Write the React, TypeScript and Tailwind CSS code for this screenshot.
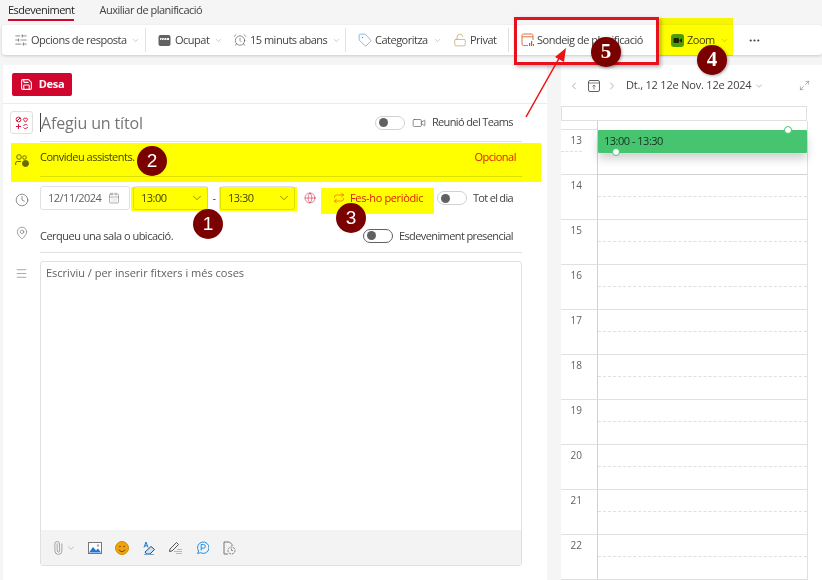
import { Fragment } from 'react'
import {
  ChevronDown,
  ChevronLeft,
  ChevronRight,
  Clock,
  Globe,
  MapPin,
  Maximize2,
  Menu,
  MoreHorizontal,
  Paperclip,
  Repeat,
  Save,
  SlidersHorizontal,
  Tag,
  AlarmClock,
  LockOpen,
  Video,
  CalendarDays,
} from 'lucide-react'

const hours = [14, 15, 16, 17, 18, 19, 20, 21, 22]

function Sep({ className }: { className: string }) {
  return <div className={`h-[24px] w-px shrink-0 bg-[#e0e0e0] ${className}`} />
}

function Toggle({ dark }: { dark?: boolean }) {
  return (
    <div className={`flex h-[14px] w-[30px] shrink-0 items-center rounded-full border bg-white px-[3px] ${dark ? 'border-[#616161]' : 'border-[#d1d1d1]'}`}>
      <div className="h-[9px] w-[9px] rounded-full bg-[#616161]" />
    </div>
  )
}

function Badge({ n, serif, className }: { n: number; serif?: boolean; className: string }) {
  return (
    <div className={`absolute z-30 flex h-[30px] w-[30px] items-center justify-center rounded-full bg-[#7b0000] text-white ${serif ? "font-['Liberation_Serif',serif] text-[21px] font-bold shadow-[1px_1px_3px_rgba(0,0,0,0.35)]" : "font-['Liberation_Sans',sans-serif] text-[19px]"} ${className}`}>
      {n}
    </div>
  )
}

function Chev({ className }: { className: string }) {
  return <ChevronDown size={9} strokeWidth={1} className={`shrink-0 text-[#777] ${className}`} />
}

function BusyIcon() {
  return (
    <svg width="13" height="13" viewBox="0 0 13 13" className="ml-[12px] mr-[4px] shrink-0">
      <rect x="0.5" y="1" width="12" height="11" rx="2" fill="#616161" />
      <path d="M2 4 H11 V6 H2 Z" fill="#fff" />
      <path d="M3 6 L4 4 M5.5 6 L6.5 4 M8 6 L9 4" stroke="#616161" strokeWidth="0.7" />
    </svg>
  )
}

function PollIcon() {
  return (
    <svg width="13" height="14" viewBox="0 0 13 14" className="mr-[3px] shrink-0">
      <path d="M7 12.5 H2.5 A1.5 1.5 0 0 1 1 11 V2.5 A1.5 1.5 0 0 1 2.5 1 H10.5 A1.5 1.5 0 0 1 12 2.5 V7" fill="none" stroke="#d9764a" strokeWidth="1" />
      <path d="M1 3.8 H12" stroke="#d9764a" strokeWidth="1" />
      <path d="M8 10 h1.2 v3 h-1.2 z M10 8 h1.2 v5 h-1.2 z M12 11 h1 v2 h-1 z" fill="#d9540f" />
    </svg>
  )
}

function ZoomIcon() {
  return (
    <svg width="13" height="13" viewBox="0 0 13 13" className="ml-[26px] mr-[3px] shrink-0">
      <rect width="13" height="13" rx="3" fill="#4f9e10" />
      <rect x="2.5" y="4" width="5.5" height="5" rx="1" fill="#222" />
      <path d="M8.5 6 L11 4.3 V8.7 L8.5 7 Z" fill="#222" />
    </svg>
  )
}

function ElementsIcon() {
  return (
    <svg width="14" height="14" viewBox="0 0 14 14" fill="none" stroke="#d1062f" strokeWidth="0.9">
      <circle cx="3.5" cy="3.5" r="2.4" />
      <path d="M2 5 L5 2" />
      <path d="M10.5 6.2 L8.4 3.6 A1.3 1.3 0 0 1 10.5 2.4 A1.3 1.3 0 0 1 12.6 3.6 Z" />
      <path d="M1 10.5 H6 M3.5 8 V13" />
      <path d="M8.5 10 A2.3 2.3 0 0 1 12.6 9.5 M12.6 11 A2.3 2.3 0 0 1 8.5 11.5" />
    </svg>
  )
}

function PeopleIcon() {
  return (
    <svg width="14" height="13" viewBox="0 0 14 13" fill="none" stroke="#6a6a20" strokeWidth="1" className="mt-[20px]">
      <circle cx="4" cy="3" r="2.3" />
      <circle cx="9.5" cy="3.5" r="1.8" />
      <path d="M0.7 11 V9 A1.5 1.5 0 0 1 2.2 7.5 H6" />
      <circle cx="10.5" cy="9.5" r="3" fill="#6a6a20" />
    </svg>
  )
}

function ImgIcon() {
  return (
    <svg width="14" height="12" viewBox="0 0 14 12" className="ml-[12px] shrink-0">
      <rect x="0.5" y="0.5" width="13" height="11" fill="#fff" stroke="#777" />
      <path d="M1 10.5 L5 5 L8 8.5 L10 6.5 L13 10.5 Z" fill="#1f77d0" />
      <circle cx="10" cy="3.5" r="1.2" fill="#aaa" />
    </svg>
  )
}

function EmojiIcon() {
  return (
    <svg width="14" height="14" viewBox="0 0 14 14" className="ml-[13px] shrink-0">
      <circle cx="7" cy="7" r="6.5" fill="#f0a30a" stroke="#d48c00" />
      <circle cx="5" cy="5.5" r="0.8" fill="#6a4a00" />
      <circle cx="9" cy="5.5" r="0.8" fill="#6a4a00" />
      <path d="M3.8 8.5 A3.5 3.5 0 0 0 10.2 8.5" fill="none" stroke="#6a4a00" strokeWidth="0.9" />
    </svg>
  )
}

function EditorIcon() {
  return (
    <svg width="12" height="14" viewBox="0 0 12 14" fill="none" className="ml-[14px] shrink-0">
      <path d="M1 6.5 L3 1 L5 6.5 M1.8 4.8 H4.2" stroke="#1f77d0" />
      <path d="M2 11 L8 5.5 L11.5 8.5 L7 13 H3.5 Z" fill="#cfe3f6" stroke="#1f4f7a" />
      <path d="M1 13.5 H11" stroke="#7aa7d0" />
    </svg>
  )
}

function SignIcon() {
  return (
    <svg width="15" height="13" viewBox="0 0 15 13" fill="none" className="ml-[13px] shrink-0">
      <path d="M1.5 10.5 L2 8 L8.5 1.5 L10.5 3.5 L4 10 Z" stroke="#555" />
      <path d="M6 10.5 H14 M8 12.5 H14 M9 8.5 H14" stroke="#7db5e8" strokeWidth="0.8" />
    </svg>
  )
}

function LoopIcon() {
  return (
    <svg width="13" height="13" viewBox="0 0 13 13" fill="none" stroke="#1f8fe8" className="ml-[13px] shrink-0">
      <path d="M1.5 12.5 L2.6 10 A5.7 5.7 0 1 1 4.5 11.7 Z" />
      <path d="M5.2 9.5 V3.5 H7.5 A1.8 1.8 0 0 1 7.5 7.2 H5.2" />
    </svg>
  )
}

function DocClockIcon() {
  return (
    <svg width="13" height="14" viewBox="0 0 13 14" fill="none" stroke="#777" className="ml-[14px] shrink-0">
      <path d="M5 13 H1 V1 H6.5 L9 3.5 V5" />
      <circle cx="8.5" cy="9.5" r="3.5" strokeDasharray="2 1" />
      <path d="M8.5 7.5 V9.5 H10" strokeWidth="0.8" />
    </svg>
  )
}

function TodayIcon() {
  return (
    <svg width="12" height="12" viewBox="0 0 12 12" fill="none" stroke="#616161" className="ml-[8px] shrink-0">
      <rect x="0.5" y="0.5" width="11" height="11" rx="1.5" />
      <path d="M0.5 3 H11.5 M6 5 V9.5 M4.5 6.5 L6 5 L7.5 6.5" strokeWidth="0.8" />
    </svg>
  )
}

function Toolbar() {
  return (
    <div className="ml-[2px] mt-[5px] flex h-[30px] items-center whitespace-nowrap rounded-[3px] bg-white pl-[12px] text-[11px] tracking-[-0.5px] text-[#424242] shadow-[0_1px_3px_rgba(0,0,0,0.18)]">
      <SlidersHorizontal size={14} strokeWidth={1} className="mr-[3px] shrink-0" />
      <span className="w-[95px]">Opcions de resposta</span>
      <Chev className="ml-[5px]" />
      <Sep className="ml-[5px]" />
      <BusyIcon />
      <span className="w-[33px]">Ocupat</span>
      <Chev className="ml-[6px]" />
      <AlarmClock size={14} strokeWidth={1} className="ml-[10px] mr-[3px] shrink-0" />
      <span className="w-[76px]">15 minuts abans</span>
      <Chev className="ml-[6px]" />
      <Sep className="ml-[4px]" />
      <Tag size={14} strokeWidth={1} className="ml-[12px] mr-[3px] shrink-0 text-[#2f8fe0]" />
      <span className="w-[53px]">Categoritza</span>
      <Chev className="ml-[5px]" />
      <LockOpen size={14} strokeWidth={1.2} className="ml-[11px] mr-[3px] shrink-0 text-[#c19c5c]" />
      <span className="w-[26px]">Privat</span>
      <Sep className="ml-[12px] mr-[12px]" />
      <PollIcon />
      <span className="w-[108px]">Sondeig de planificació</span>
      <ZoomIcon />
      <span className="w-[28px]">Zoom</span>
      <Chev className="ml-[5px]" />
      <MoreHorizontal size={13} className="ml-[19px] shrink-0" />
    </div>
  )
}

function EventForm() {
  return (
    <div className="ml-[3px] flex w-[544px] shrink-0 flex-col bg-white text-[#424242]">
      <div className="flex h-[39px] items-center border-b border-[#ebebeb] pl-[9px]">
        <button className="flex h-[23px] w-[60px] items-center justify-center gap-[6px] rounded-[2px] bg-[#d1062f] text-[11px] font-bold tracking-[-0.3px] text-white">
          <Save size={13} />
          Desa
        </button>
      </div>
      <div className="flex">
        <div className="flex w-[37px] shrink-0 flex-col items-center text-[#616161]">
          <div className="mt-[7px] flex h-[23px] w-[23px] items-center justify-center rounded-[3px] border border-[#e0e0e0]">
            <ElementsIcon />
          </div>
          <PeopleIcon />
          <Clock size={14} strokeWidth={1.2} className="mt-[26px]" />
          <MapPin size={14} strokeWidth={1} className="mt-[19px]" />
          <Menu size={13} strokeWidth={1} className="mt-[27px]" />
        </div>
        <div className="w-[482px] whitespace-nowrap text-[11px] tracking-[-0.5px]">
          <div className="flex h-[38px] items-center border-b border-[#e0e0e0]">
            <div className="h-[19px] w-px bg-[#424242]" />
            <span className="pt-[1px] text-[16px] tracking-[-0.15px] text-[#757575]">Afegiu un títol</span>
            <div className="ml-auto flex items-center pr-[9px]">
              <Toggle />
              <Video size={14} strokeWidth={1} className="ml-[7px] mr-[6px]" />
              <span className="tracking-[-0.62px]">Reunió del Teams</span>
            </div>
          </div>
          <div className="flex h-[35px] items-center justify-between border-b border-[#e0e0e0] pb-[3px]">
            <span>Convideu assistents.</span>
            <span className="pr-[6px] text-[#e02020]">Opcional</span>
          </div>
          <div className="mt-[9px] flex h-[24px] items-center">
            <div className="flex h-[24px] w-[90px] items-center justify-between rounded-[3px] border border-[#e0e0e0] pl-[7px] pr-[9px] text-[#616161]">
              12/11/2024
              <CalendarDays size={12} strokeWidth={1} />
            </div>
            <div className="ml-[3px] flex h-[24px] w-[75px] items-center justify-between rounded-[3px] border border-[#e0e0e0] pl-[7px] pr-[3px]">
              13:00
              <ChevronDown size={14} strokeWidth={1} />
            </div>
            <span className="w-[12px] text-center">-</span>
            <div className="flex h-[24px] w-[75px] items-center justify-between rounded-[3px] border border-[#e0e0e0] pl-[7px] pr-[3px]">
              13:30
              <ChevronDown size={14} strokeWidth={1} />
            </div>
            <Globe size={12} strokeWidth={1} className="ml-[9px] text-[#d1062f]" />
            <Repeat size={12} strokeWidth={1.2} className="ml-[17px] text-[#e64a00]" />
            <span className="ml-[5px] w-[72px] tracking-[-0.35px] text-[#e02020]">Fes-ho periòdic</span>
            <div className="ml-[15px]"><Toggle /></div>
            <span className="ml-[6px] tracking-[-0.7px]">Tot el dia</span>
          </div>
          <div className="flex h-[43px] items-end justify-between border-b border-[#e0e0e0] pb-[8px]">
            <span>Cerqueu una sala o ubicació.</span>
            <div className="flex items-center gap-[6px] pr-[9px]">
              <Toggle dark />
              <span className="tracking-[-0.6px]">Esdeveniment presencial</span>
            </div>
          </div>
          <div className="mt-[8px] flex h-[305px] flex-col rounded-[3px] border border-[#e0e0e0]">
            <div className="flex-1 px-[5px] pt-[3px] tracking-normal text-[#616161]">Escriviu / per inserir fitxers i més coses</div>
            <div className="flex h-[35px] items-center bg-[#f3f3f3] pl-[10px]">
              <Paperclip size={14} strokeWidth={1} className="-rotate-45 text-[#777]" />
              <ChevronDown size={10} strokeWidth={1} className="ml-[1px] text-[#777]" />
              <ImgIcon />
              <EmojiIcon />
              <EditorIcon />
              <SignIcon />
              <LoopIcon />
              <DocClockIcon />
            </div>
          </div>
        </div>
      </div>
    </div>
  )
}

function CalendarPane() {
  return (
    <div className="ml-[14px] flex flex-1 flex-col bg-white text-[#616161]">
      <div className="flex h-[43px] items-center whitespace-nowrap text-[11px]">
        <ChevronLeft size={12} strokeWidth={1} className="ml-[7px]" />
        <TodayIcon />
        <ChevronRight size={12} strokeWidth={1} className="ml-[6px]" />
        <span className="ml-[8px] tracking-[-0.2px] text-[#424242]">Dt., 12 12e Nov. 12e 2024</span>
        <ChevronDown size={10} strokeWidth={1} className="ml-[3px]" />
        <Maximize2 size={11} strokeWidth={1} className="ml-auto mr-[12px]" />
      </div>
      <div className="mr-[15px] h-[15px] border border-[#e0e0e0]" />
      <div className="mr-[14px] grid grid-cols-[36px_1fr] border-r border-[#e0e0e0] text-[10px]">
        <div className="h-[9px] border-b border-[#e0e0e0]" />
        <div className="h-[9px] border-l border-[#d1d1d1]" />
        <div className="h-[45px] border-b border-[#e0e0e0] pr-[15px] pt-[3px] text-right">
          <div className="h-[19px] border-b border-dashed border-[#e0e0e0]">13</div>
        </div>
        <div className="relative h-[45px] border-b border-l border-[#d1d1d1]">
          <div className="flex h-[23px] items-center rounded-[1px] bg-[#47c46f] pl-[6px] text-[11px] tracking-[-0.5px] text-[#17301f] shadow-[0_6px_10px_rgba(0,0,0,0.18)]">13:00 - 13:30</div>
          <div className="absolute left-[14px] top-[18px] h-[8px] w-[8px] rounded-full border-[1.5px] border-[#47c46f] bg-white" />
          <div className="absolute right-[15px] top-[-4px] h-[8px] w-[8px] rounded-full border-[1.5px] border-[#47c46f] bg-white" />
        </div>
        {hours.map((h) => (
          <Fragment key={h}>
            <div className="h-[45px] border-b border-[#e0e0e0] pr-[15px] pt-[3px] text-right">{h}</div>
            <div className="flex h-[45px] flex-col border-b border-l border-b-[#e0e0e0] border-l-[#d1d1d1]">
              <div className="h-[22px] border-b border-dashed border-[#e0e0e0]" />
            </div>
          </Fragment>
        ))}
      </div>
    </div>
  )
}

export default function App() {
  return (
    <div className="relative h-[580px] w-[822px] overflow-hidden bg-[#f5f5f5] font-['Open_Sans','Noto_Sans',sans-serif]">
      <div className="flex h-[20px] items-center whitespace-nowrap pl-[8px] text-[11px] tracking-[-0.5px] text-[#424242]">
        <div className="relative">
          <span className="text-[#242424]">Esdeveniment</span>
          <div className="absolute left-0 right-0 top-[17px] h-[2px] bg-[#d1062f]" />
        </div>
        <span className="ml-[25px]">Auxiliar de planificació</span>
      </div>
      <Toolbar />
      <div className="mt-[10px] flex h-[515px]">
        <EventForm />
        <CalendarPane />
      </div>

      <div className="absolute left-[11px] top-[143px] h-[39px] w-[530px] bg-[#ffff00] mix-blend-multiply" />
      <div className="absolute left-[131px] top-[187px] h-[24px] w-[77px] bg-[#ffff00] mix-blend-multiply" />
      <div className="absolute left-[219px] top-[187px] h-[24px] w-[78px] bg-[#ffff00] mix-blend-multiply" />
      <div className="absolute left-[321px] top-[188px] h-[26px] w-[113px] bg-[#ffff00] mix-blend-multiply" />
      <div className="absolute left-[660px] top-[18px] h-[38px] w-[73px] bg-[#ffff00] mix-blend-multiply" />

      <div className="absolute left-[514px] top-[17px] z-20 h-[48px] w-[145px] border-[3px] border-[#e8101c] shadow-[2px_2px_4px_rgba(0,0,0,0.3)]" />
      <svg className="absolute left-[520px] top-[45px] z-20" width="50" height="75" viewBox="0 0 50 75">
        <line x1="6" y1="72" x2="42" y2="8" stroke="#ee1111" strokeWidth="1.5" />
        <path d="M46 3 L44 17 L35 12 Z" fill="#ee1111" />
      </svg>

      <Badge n={1} className="left-[193px] top-[209px]" />
      <Badge n={2} className="left-[137px] top-[146px]" />
      <Badge n={3} className="left-[336px] top-[203px]" />
      <Badge n={4} serif className="left-[697px] top-[45px]" />
      <Badge n={5} serif className="left-[591px] top-[37px]" />
    </div>
  )
}
